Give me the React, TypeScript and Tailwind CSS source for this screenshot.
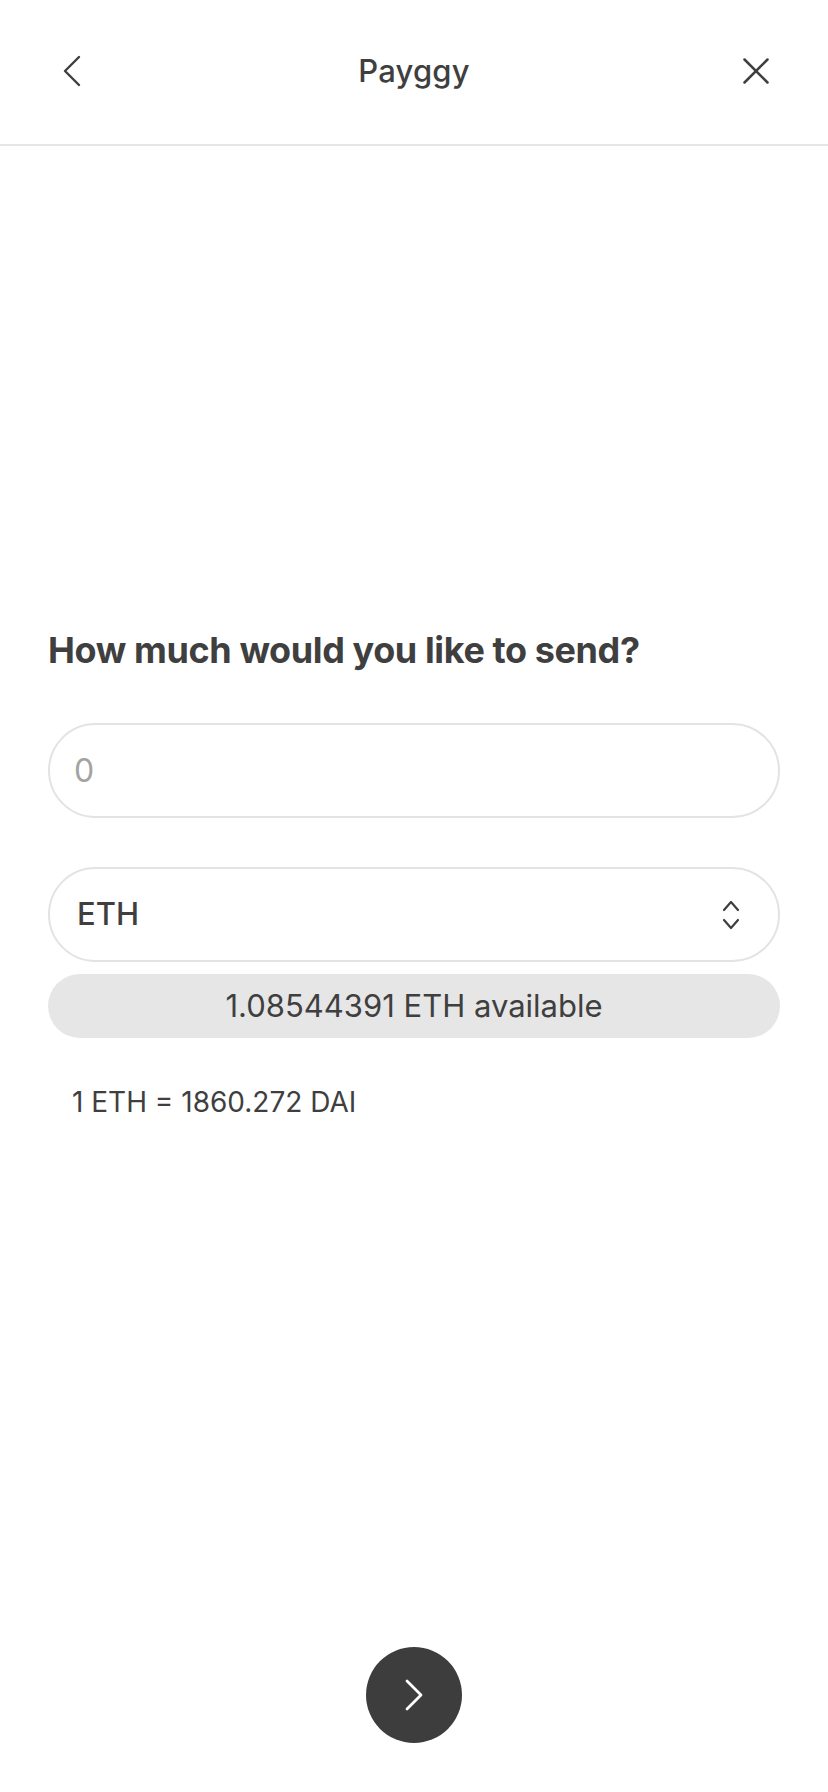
import { ChevronLeft, ChevronRight, X } from "lucide-react";

function UpDown() {
  return (
    <svg width="18" height="34" viewBox="0 0 18 34" fill="none" stroke="#3f3f3f" strokeWidth="2.2" strokeLinecap="round" strokeLinejoin="round">
      <path d="M2 12 L9 4 L16 12" />
      <path d="M2 22 L9 30 L16 22" />
    </svg>
  );
}

export default function App() {
  return (
    <div
      className="h-[1792px] w-full bg-white text-[#3f3f3f] flex flex-col"
      style={{ fontFamily: "Inter, 'Noto Sans', sans-serif" }}
    >
      {/* Header */}
      <header className="h-[146px] shrink-0 border-b-2 border-[#e6e6e6] flex items-center justify-between px-[44px] pb-[2px]">
        <button className="w-[56px] h-[56px] flex items-center justify-center">
          <ChevronLeft size={60} strokeWidth={1.05} className="text-[#3f3f3f]" />
        </button>
        <h1 className="text-[31px] font-medium tracking-[0.2px]">Payggy</h1>
        <button className="w-[56px] h-[56px] flex items-center justify-center">
          <X size={46} strokeWidth={1.3} className="text-[#3f3f3f]" />
        </button>
      </header>

      {/* Content */}
      <main className="flex-1 flex flex-col px-[48px]">
        <h2 className="mt-[484px] text-[36px] leading-[40px] font-bold tracking-[-0.4px]">
          How much would you like to send?
        </h2>

        <div className="mt-[53px] h-[95px] rounded-full border-2 border-[#e3e3e3] flex items-center px-[24px]">
          <input
            placeholder="0"
            className="w-full bg-transparent outline-none text-[32px] placeholder:text-[#a3a3a3]"
          />
        </div>

        <div className="mt-[49px] h-[95px] rounded-full border-2 border-[#e3e3e3] flex items-center justify-between pl-[27px] pr-[38px]">
          <span className="text-[31px] font-medium">ETH</span>
          <UpDown />
        </div>

        <div className="mt-[12px] h-[64px] rounded-full bg-[#e6e6e6] flex items-center justify-center">
          <span className="text-[31px]">1.08544391 ETH available</span>
        </div>

        <p className="mt-[48px] pl-[24px] text-[28px] leading-[32px]">1 ETH = 1860.272 DAI</p>

        <div className="flex-1" />

        <div className="flex justify-center pb-[49px]">
          <button className="w-[96px] h-[96px] rounded-full bg-[#3d3d3d] flex items-center justify-center">
            <ChevronRight size={56} strokeWidth={1.2} className="text-white" />
          </button>
        </div>
      </main>
    </div>
  );
}
